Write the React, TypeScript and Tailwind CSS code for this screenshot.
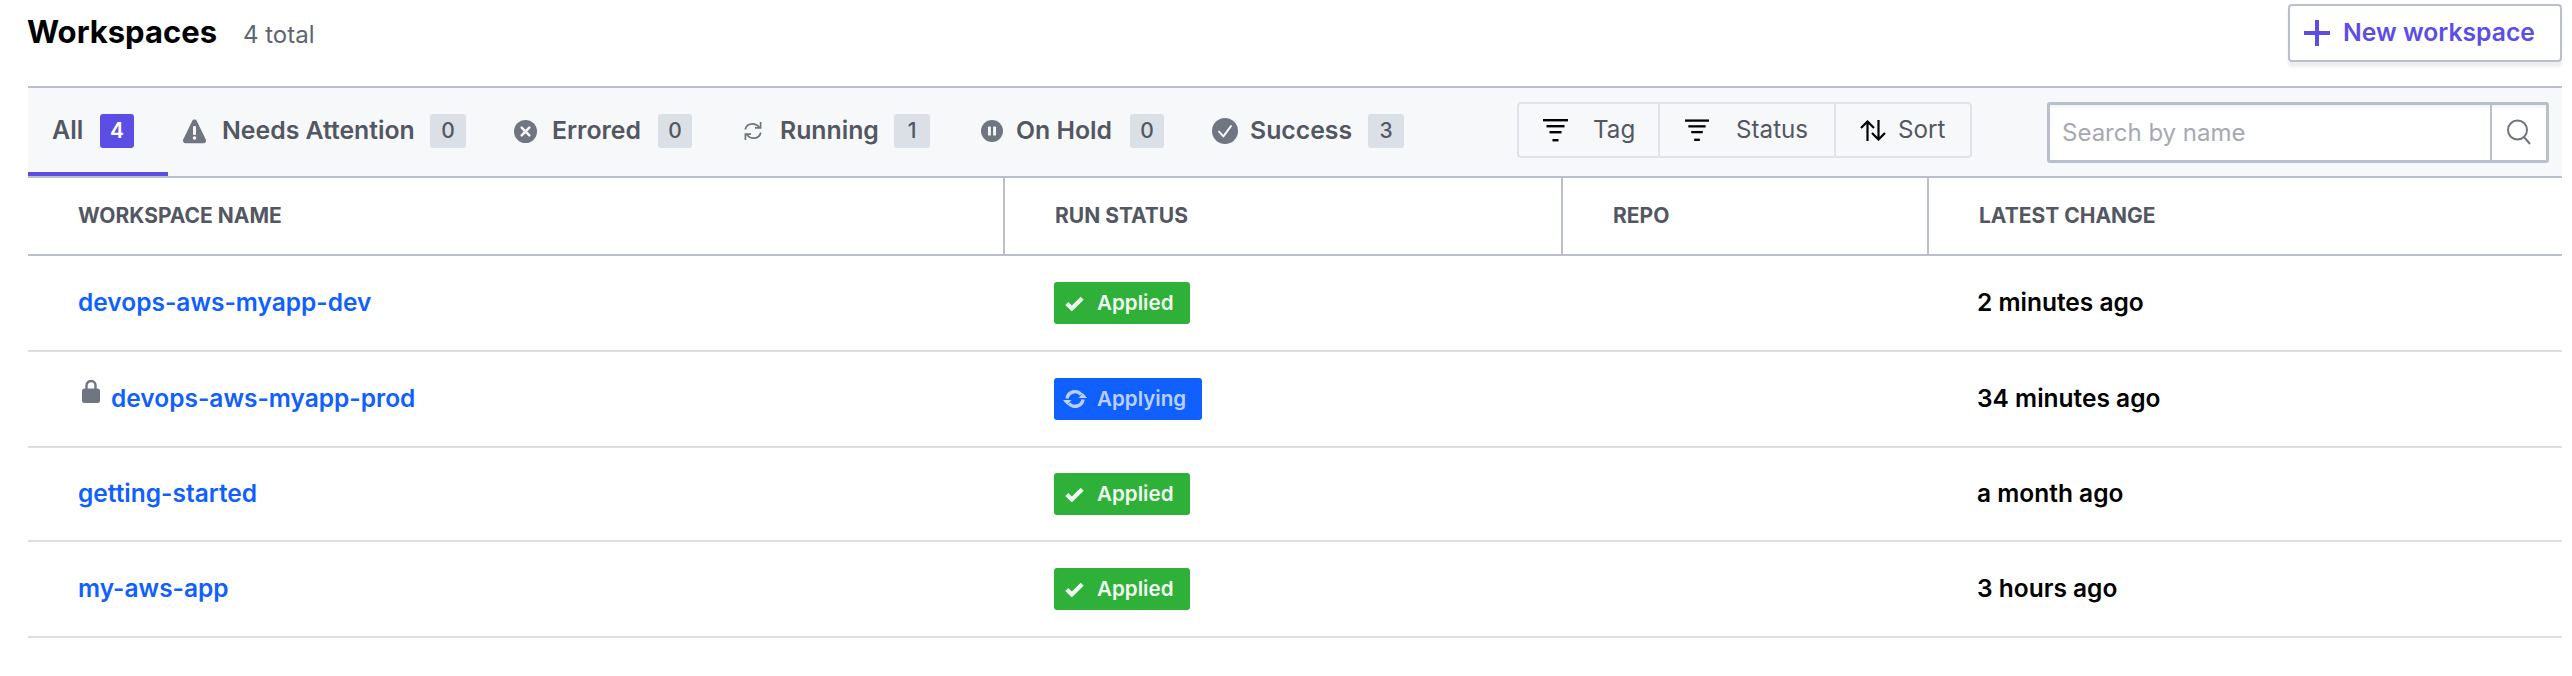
import React from "react";

const Warn = () => (
  <svg width="25" height="25" viewBox="0 0 25 25" className="shrink-0"><path d="M12.5 0.5c1 0 1.8.5 2.3 1.4l9 18.6c.8 1.9-.3 3.8-2.3 3.8H3.5c-2 0-3.1-1.9-2.3-3.8l9-18.6c.5-.9 1.3-1.4 2.3-1.4z" fill="#6f7682"/><rect x="11" y="7" width="3" height="9" rx="1" fill="#f7f8fa"/><circle cx="12.5" cy="19" r="1.8" fill="#f7f8fa"/></svg>
);
const Err = () => (
  <svg width="23" height="23" viewBox="0 0 24 24" className="shrink-0"><circle cx="12" cy="12" r="12" fill="#6f7682"/><path d="M8 8l8 8M16 8l-8 8" stroke="#f7f8fa" strokeWidth="2.6" strokeLinecap="round"/></svg>
);
const Run = () => (
  <svg width="18" height="20" viewBox="0 0 18 20" fill="none" stroke="#6f7682" strokeWidth="1.7" className="shrink-0"><path d="M1.2 8.5C2 5 4.8 2.8 8.5 2.8c2.8 0 5 1.2 6.8 3.4" /><path d="M16.6 1v5.8h-5.6" /><path d="M16.8 11.5c-.8 3.5-3.6 5.7-7.3 5.7-2.8 0-5-1.2-6.8-3.4" /><path d="M1.4 19v-5.8H7" /></svg>
);
const Hold = () => (
  <svg width="22" height="22" viewBox="0 0 24 24" className="shrink-0"><circle cx="12" cy="12" r="12" fill="#6f7682"/><rect x="7.6" y="7" width="3.2" height="10" rx="1" fill="#f7f8fa"/><rect x="13.2" y="7" width="3.2" height="10" rx="1" fill="#f7f8fa"/></svg>
);
const Succ = () => (
  <svg width="26" height="26" viewBox="0 0 24 24" fill="none" className="shrink-0"><circle cx="12" cy="12" r="12" fill="#6f7682"/><path d="M6.5 12.5l4 4.5 7-9.5" stroke="#f7f8fa" strokeWidth="1.8" strokeLinecap="round" strokeLinejoin="round"/></svg>
);
const Filter = ({ w }: { w: number }) => (
  <svg width={w} height="24" viewBox="0 0 25 24" className="shrink-0"><rect x="0" y="1" width="25" height="2.4" fill="#000"/><rect x="3.5" y="7" width="18" height="2.4" fill="#000"/><rect x="6.5" y="13" width="12" height="2.4" fill="#000"/><rect x="9.5" y="21" width="6" height="2.4" fill="#000"/></svg>
);
const SortI = () => (
  <svg width="26" height="21" viewBox="0 0 26 21" fill="none" stroke="#000" strokeWidth="2.2" className="shrink-0"><path d="M7.5 21V2M1 8l6.5-6.5L14 8M18.5 0v19M12 13l6.5 6.5L25 13"/></svg>
);
const Search = () => (
  <svg width="24" height="26" viewBox="0 0 24 26" fill="none" stroke="#6f7682" strokeWidth="2" className="shrink-0"><circle cx="10.5" cy="11" r="9.5"/><path d="M17 18l6 7"/></svg>
);
const Lock = () => (
  <svg width="18" height="23" viewBox="0 0 18 23" className="shrink-0"><path d="M4.5 10V5.5a4.5 4.5 0 0 1 9 0V10" fill="none" stroke="#6f7682" strokeWidth="2.4"/><rect x="0" y="8.5" width="18" height="14.5" rx="2.5" fill="#6f7682"/></svg>
);
const Check = () => (
  <svg width="19" height="15" viewBox="0 0 19 15" className="shrink-0"><path d="M1.8 7.5l5 5L17.2 2.2" fill="none" stroke="#eefaf0" strokeWidth="4.2"/></svg>
);
const Sync = () => (
  <svg width="24" height="20" viewBox="0 0 24 20" fill="none" stroke="#b9d0ff" strokeWidth="3.4" className="shrink-0"><path d="M4 9.5A8 8 0 0 1 18 5.5"/><path d="M20 10.5A8 8 0 0 1 6 14.5"/><path d="M15.5 9h8.5l-4.2-5z" fill="#b9d0ff" stroke="none"/><path d="M0 11h8.5l-4.2 5z" fill="#b9d0ff" stroke="none"/></svg>
);

const tabs = [
  { label: "Needs Attention", n: "0", icon: <Warn />, cls: "ml-[14px]", pad: "pl-[15px] w-[223px]", w: "w-[36px]" },
  { label: "Errored", n: "0", icon: <Err />, cls: "ml-[48px]", pad: "pl-[15px] w-[121px]", w: "w-[34px]" },
  { label: "Running", n: "1", icon: <Run />, cls: "ml-[52px]", pad: "pl-[18px] w-[132px]", w: "w-[36px]" },
  { label: "On Hold", n: "0", icon: <Hold />, cls: "ml-[51px]", pad: "pl-[13px] w-[127px]", w: "w-[34px]" },
  { label: "Success", n: "3", icon: <Succ />, cls: "ml-[48px]", pad: "pl-[12px] w-[130px]", w: "w-[36px]" },
];

const rows = [
  { name: "devops-aws-myapp-dev", status: "Applied", time: "2 minutes ago", h: "h-[96px]" },
  { name: "devops-aws-myapp-prod", status: "Applying", time: "34 minutes ago", lock: true, h: "h-[96px]" },
  { name: "getting-started", status: "Applied", time: "a month ago", h: "h-[94px]" },
  { name: "my-aws-app", status: "Applied", time: "3 hours ago", h: "h-[96px]" },
];

export default function App() {
  return (
    <div className="w-[2572px] h-[676px] bg-white pl-[28px] pr-[10px] font-['Inter',sans-serif] text-black overflow-hidden">
      <div className="h-[86px] flex items-start justify-between">
        <div className="flex items-baseline mt-[11px] -ml-[1px]">
          <h1 className="text-[31px] leading-[42px] font-bold">Workspaces</h1>
          <span className="ml-[26px] text-[24px] text-[#5d636f]">4 total</span>
        </div>
        <button className="mt-[4px] w-[274px] h-[58px] flex items-center pl-[14px] gap-[13px] border-2 border-[#b9bfcc] rounded-[4px] bg-white shadow-[0_5px_3px_rgba(80,90,110,0.1)] text-[#5c4ee5] text-[24.7px] font-semibold">
          <svg width="26" height="26" viewBox="0 0 26 26" className="shrink-0"><path d="M13 0v26M0 13h26" stroke="#5c4ee5" strokeWidth="4"/></svg>
          New workspace
        </button>
      </div>

      <div className="h-[92px] border-y-2 border-[#b9bfcc] bg-[#f7f8fa] flex items-center">
        <div className="w-[140px] self-stretch flex items-center pl-[24px] pt-[2px] text-[25px] font-semibold text-[#525761] shrink-0 border-b-4 border-[#5c4ee5]">
          <span className="w-[48px]">All</span>
          <span className="w-[34px] h-[34px] bg-[#5c4ee5] rounded-[3px] text-white text-[21px] font-semibold flex items-center justify-center">4</span>
        </div>
        {tabs.map((t) => (
          <div key={t.label} className={`flex items-center mb-[2px] text-[24.8px] font-semibold text-[#525761] shrink-0 ${t.cls}`}>
            {t.icon}
            <div className={`shrink-0 ${t.pad}`}>{t.label}</div>
            <span className={`${t.w} h-[34px] bg-[#dbdfe6] rounded-[3px] text-[21px] font-medium flex items-center justify-center shrink-0`}>{t.n}</span>
          </div>
        ))}
        <div className="ml-[113px] mb-[4px] flex h-[56px] w-[455px] border-2 border-[#dfe2e9] rounded-[4px] text-[24.2px] text-[#525761] shrink-0">
          <div className="w-[141px] flex items-center gap-[25px] pl-[24px] border-r-2 border-[#dfe2e9]"><Filter w={25} />Tag</div>
          <div className="w-[176px] flex items-center gap-[27px] pl-[25px] border-r-2 border-[#dfe2e9]"><Filter w={24} />Status</div>
          <div className="flex-1 flex items-center gap-[12px] pl-[24px]"><SortI />Sort</div>
        </div>
        <div className="ml-[75px] flex h-[61px] w-[502px] border-[3px] border-[#b9bfcc] rounded-[3px] bg-white shadow-[inset_0_2px_2px_rgba(80,90,110,0.08)] shrink-0">
          <div className="flex-1 flex items-center pl-[12px] pt-[2px] text-[24px] text-[#a5a9b1] border-r-2 border-[#b9bfcc]">Search by name</div>
          <div className="w-[54px] flex items-center justify-center"><Search /></div>
        </div>
      </div>

      <div className="h-[78px] grid grid-cols-[975px_558px_366px_1fr] border-b-2 border-[#b9bfcc] text-[21px] font-bold text-[#525761]">
        <div className="flex items-center pl-[50px]">WORKSPACE NAME</div>
        <div className="flex items-center pl-[50px] border-l-2 border-[#b9bfcc]">RUN STATUS</div>
        <div className="flex items-center pl-[50px] border-l-2 border-[#b9bfcc]">REPO</div>
        <div className="flex items-center pl-[50px] border-l-2 border-[#b9bfcc]">LATEST CHANGE</div>
      </div>

      {rows.map((r) => (
        <div key={r.name} className={`grid grid-cols-[975px_558px_366px_1fr] items-center border-b-2 border-[#dcdee6] ${r.h}`}>
          <div className="pl-[50px] pb-[2px] flex items-center text-[#1060ff] text-[24.5px] font-semibold">
            {r.lock && <span className="ml-[4px] mr-[11px] -mt-[13px]"><Lock /></span>}
            {r.name}
          </div>
          <div className="pl-[51px]">
            <span className={`inline-flex items-center h-[42px] rounded-[3px] text-[20.6px] font-semibold ${r.status === "Applied" ? "bg-[#2eb039] text-[#eefaf0] w-[136px] pl-[11px] gap-[13px]" : "bg-[#1060ff] text-[#b9d0ff] w-[148px] pl-[9px] gap-[10px]"}`}>
              {r.status === "Applied" ? <Check /> : <Sync />}
              {r.status}
            </span>
          </div>
          <div />
          <div className="pl-[50px] pb-[2px] text-[24.5px] font-semibold">{r.time}</div>
        </div>
      ))}
    </div>
  );
}
